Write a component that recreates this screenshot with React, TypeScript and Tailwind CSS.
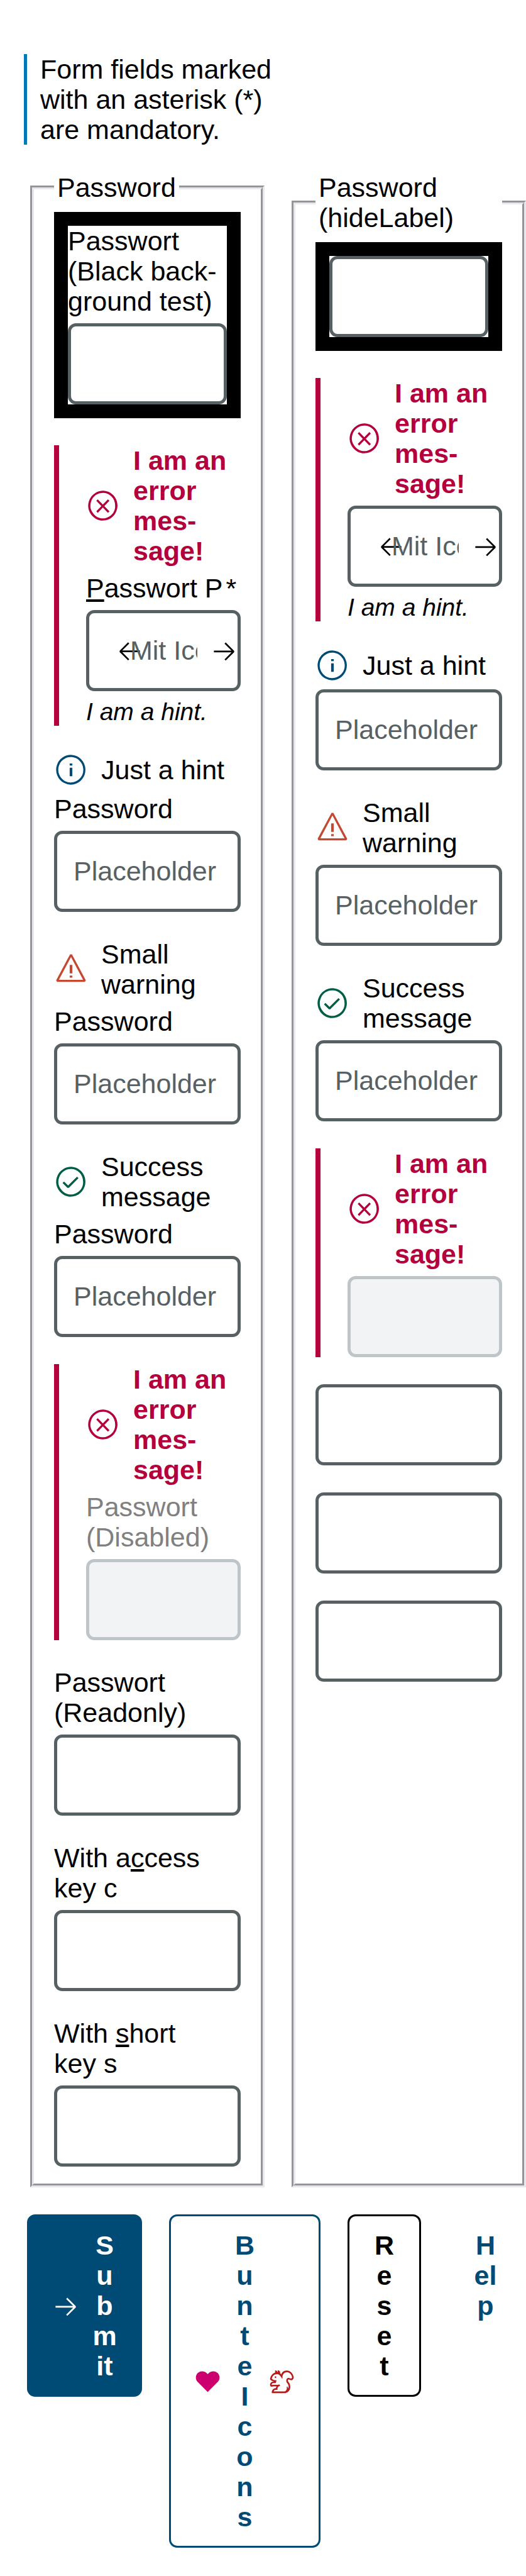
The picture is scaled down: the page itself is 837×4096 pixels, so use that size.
import type { ReactNode } from 'react';
import {
  VscArrowLeft,
  VscArrowRight,
  VscError,
  VscHeartFilled,
  VscInfo,
  VscPass,
  VscSquirrel,
  VscWarning,
} from 'react-icons/vsc';

type Tone = 'error' | 'info' | 'warning' | 'success';

const toneIcons: Record<Tone, ReactNode> = {
  error: <VscError className="size-[54px] shrink-0 text-[#b4003c]" />,
  info: <VscInfo className="size-[54px] shrink-0 text-[#004b76]" />,
  warning: <VscWarning className="size-[54px] shrink-0 text-[#c44931]" />,
  success: <VscPass className="size-[54px] shrink-0 text-[#005e47]" />,
};

const messages: Record<Tone, string> = {
  error: 'I am an error mes\u00adsage!',
  info: 'Just a hint',
  warning: 'Small warning',
  success: 'Success message',
};

function Message({ tone }: { tone: Tone }) {
  return (
    <div
      className={
        tone === 'error'
          ? 'mb-[11px] flex items-center gap-[21px] font-bold text-[#b4003c]'
          : 'mb-[11px] flex items-center gap-[21px]'
      }
    >
      {toneIcons[tone]}
      <span>{messages[tone]}</span>
    </div>
  );
}

interface FieldProps {
  id: string;
  name: string;
  label?: ReactNode;
  tone?: Tone;
  placeholder?: string;
  hint?: string;
  icons?: boolean;
  disabled?: boolean;
  readOnly?: boolean;
  required?: boolean;
}

function Field({ id, name, label, tone, placeholder, hint, icons, disabled, readOnly, required }: FieldProps) {
  return (
    <div className={tone === 'error' ? 'border-l-8 border-[#b4003c] pl-[43px]' : ''}>
      {tone && <Message tone={tone} />}
      {label && (
        <label htmlFor={id} className={disabled ? 'mb-[11px] block text-[#808080]' : 'mb-[11px] block'}>
          {label}
          {required && <span className="ml-[5px]">*</span>}
        </label>
      )}
      <div className="relative">
        {icons && (
          <>
            <VscArrowLeft className="absolute inset-y-0 left-12 my-auto size-[43px]" />
            <VscArrowRight className="absolute inset-y-0 right-[5px] my-auto size-[43px]" />
          </>
        )}
        <input
          id={id}
          type="password"
          aria-label={label ? undefined : name}
          placeholder={placeholder}
          disabled={disabled}
          readOnly={readOnly}
          required={required}
          className={
            'relative block h-[129px] w-full rounded-[13px] border-[5px] placeholder:text-[#576164] placeholder:opacity-100 ' +
            (disabled ? 'border-[#bdc5c9] bg-[#f2f3f4] ' : 'border-[#576164] bg-transparent ') +
            (icons ? 'pr-16 pl-[65px]' : 'px-[26px]')
          }
        />
      </div>
      {hint && <p className="mt-[11px] text-[39px] leading-[44px] italic">{hint}</p>}
    </div>
  );
}

function BlackFrame({ children }: { children: ReactNode }) {
  return (
    <div className="bg-black p-[22px]">
      <div className="bg-white">{children}</div>
    </div>
  );
}

function Group({ title, children }: { title: string; children: ReactNode }) {
  return (
    <fieldset className="min-w-0 border-[6px] border-[#e8e8ec] px-8 pt-[15px] pb-[27px] [border-style:groove]">
      <legend className="px-[5px]">{title}</legend>
      <div className="flex flex-col gap-[43px]">{children}</div>
    </fieldset>
  );
}

const buttonBase = 'flex items-center gap-[21px] rounded-[13px] border-[3px] px-[37px] py-[22px] text-center font-bold ';

export default function App() {
  return (
    <form
      className="bg-white pt-[86px] pb-11 font-['Liberation_Sans',Arial,sans-serif] text-[43px] leading-[48px] text-black"
      onSubmit={(event) => event.preventDefault()}
    >
      <p className="ml-[38px] max-w-[400px] border-l-[5px] border-[#0077b6] pl-[21px]">
        Form fields marked with an asterisk (*) are mandatory.
      </p>

      <div className="mt-11 grid grid-cols-2 gap-[43px] pl-12">
        <Group title="Password">
          <BlackFrame>
            <Field id="pw-black" name="Passwort" label={'Passwort (Black back\u00adground test)'} />
          </BlackFrame>
          <Field
            id="pw-icons"
            name="Passwort P"
            label={
              <>
                <u>P</u>asswort P
              </>
            }
            tone="error"
            placeholder="Mit Icons"
            hint="I am a hint."
            icons
            required
          />
          <Field id="pw-info" name="Password" label="Password" tone="info" placeholder="Placeholder" />
          <Field id="pw-warning" name="Password" label="Password" tone="warning" placeholder="Placeholder" />
          <Field id="pw-success" name="Password" label="Password" tone="success" placeholder="Placeholder" />
          <Field id="pw-disabled" name="Passwort" label="Passwort (Disabled)" tone="error" disabled />
          <Field id="pw-readonly" name="Passwort" label="Passwort (Readonly)" readOnly />
          <Field
            id="pw-access"
            name="With access key c"
            label={
              <>
                With a<u>c</u>cess key{'\u00a0'}c
              </>
            }
          />
          <Field
            id="pw-short"
            name="With short key s"
            label={
              <>
                With <u>s</u>hort key{'\u00a0'}s
              </>
            }
          />
        </Group>

        <Group title="Password (hideLabel)">
          <BlackFrame>
            <Field id="hl-black" name="Passwort (Black background test)" />
          </BlackFrame>
          <Field id="hl-icons" name="Passwort P" tone="error" placeholder="Mit Icons" hint="I am a hint." icons required />
          <Field id="hl-info" name="Password" tone="info" placeholder="Placeholder" />
          <Field id="hl-warning" name="Password" tone="warning" placeholder="Placeholder" />
          <Field id="hl-success" name="Password" tone="success" placeholder="Placeholder" />
          <Field id="hl-disabled" name="Passwort (Disabled)" tone="error" disabled />
          <Field id="hl-readonly" name="Passwort (Readonly)" readOnly />
          <Field id="hl-access" name="With access key c" />
          <Field id="hl-short" name="With short key s" />
        </Group>
      </div>

      <div className="mt-[43px] flex items-start gap-[43px] pl-[43px]">
        <button type="submit" className={buttonBase + 'border-[#004b76] bg-[#004b76] text-white'}>
          <VscArrowRight className="size-[43px] shrink-0" />
          <span className="w-[39px] break-all">Submit</span>
        </button>
        <button type="button" className={buttonBase + 'border-[#004b76] text-[#004b76]'}>
          <VscHeartFilled className="size-[43px] shrink-0 text-[#cc006e]" />
          <span className="w-[33px] break-all">Bunte Icons</span>
          <VscSquirrel className="size-[43px] shrink-0 text-[#b61c1c]" />
        </button>
        <button type="reset" className={buttonBase + 'border-black'}>
          <span className="w-[37px] break-all">Reset</span>
        </button>
        <button type="button" className={buttonBase + 'border-transparent text-[#004b76]'}>
          <span className="w-[39px] break-all">Help</span>
        </button>
      </div>
    </form>
  );
}
